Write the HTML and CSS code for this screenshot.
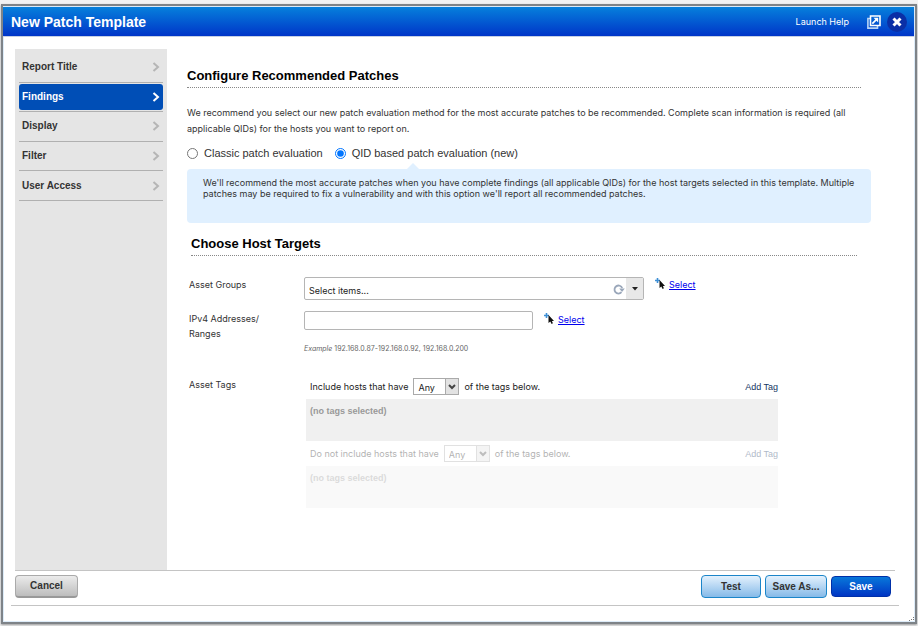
FILE: index.html
```html
<!DOCTYPE html>
<html lang="en">
<head>
<meta charset="utf-8">
<title>New Patch Template</title>
<link rel="stylesheet" href="styles.css">
</head>
<body>
<div class="window">
  <header class="titlebar">
    <h1>New Patch Template</h1>
    <a class="help" href="#">Launch Help</a>
    <button class="icon-btn" type="button" aria-label="Open in new window">
      <svg width="14" height="14" viewBox="0 0 14 14" fill="none" stroke="#fff"><path d="M3 3.5H.9v9.600h9.600V11" stroke="#b9d4f5" stroke-width="1.600"/><path d="M3.500 1h9.500v9.500H3.500z" stroke-width="1.600"/><path d="M5.300 8.700l4-4" stroke-width="1.800"/><path d="M6.500 2.800h4.700v4.700z" fill="#fff" stroke="none"/></svg>
    </button>
    <button class="icon-btn close" type="button" aria-label="Close">
      <svg width="20" height="20" viewBox="0 0 20 20"><circle cx="10" cy="10" r="10" fill="#0a2fa6"/><path d="M6.500 6.500l7 7M13.500 6.500l-7 7" stroke="#fff" stroke-width="3"/></svg>
    </button>
  </header>

  <div class="body">
    <nav class="sidebar">
      <ul>
        <li><a href="#">Report Title<svg class="chev" viewBox="0 0 8 10"><path d="M1.500 1l4.500 4-4.500 4"/></svg></a></li>
        <li><a class="active" href="#">Findings<svg class="chev" viewBox="0 0 8 10"><path d="M1.500 1l4.500 4-4.500 4"/></svg></a></li>
        <li><a href="#">Display<svg class="chev" viewBox="0 0 8 10"><path d="M1.500 1l4.500 4-4.500 4"/></svg></a></li>
        <li><a href="#">Filter<svg class="chev" viewBox="0 0 8 10"><path d="M1.500 1l4.500 4-4.500 4"/></svg></a></li>
        <li><a href="#">User Access<svg class="chev" viewBox="0 0 8 10"><path d="M1.500 1l4.500 4-4.500 4"/></svg></a></li>
      </ul>
    </nav>

    <main class="content">
      <section>
        <h2 class="wide">Configure Recommended Patches</h2>
        <p class="intro">We recommend you select our new patch evaluation method for the most accurate patches to be recommended. Complete scan information is required (all applicable QIDs) for the hosts you want to report on.</p>
        <div class="radios">
          <label><input type="radio" name="method">Classic patch evaluation</label>
          <label><input type="radio" name="method" checked>QID based patch evaluation (new)</label>
        </div>
        <p class="info">We'll recommend the most accurate patches when you have complete findings (all applicable QIDs) for the host targets selected in this template. Multiple patches may be required to fix a vulnerability and with this option we'll report all recommended patches.</p>
      </section>

      <section class="targets">
        <h2>Choose Host Targets</h2>
        <div class="field groups">
          <label for="groups">Asset Groups</label>
          <div class="control">
            <div class="combo">
              <input id="groups" type="text" value="Select items...">
              <svg class="refresh" width="12" height="12" viewBox="0 0 12 12"><path d="M8.500 9.200A4 4 0 1 1 9.200 5" fill="none" stroke="#9aa7ba" stroke-width="1.800"/><path d="M6.200 5.500h5.600L9 9z" fill="#9aa7ba"/></svg>
              <button type="button" aria-label="Show items"><svg width="6" height="4" viewBox="0 0 6 4"><path d="M0 0h6L3 3.500z" fill="#222"/></svg></button>
            </div>
            <a class="pick" href="#"><svg width="10" height="12" viewBox="0 0 10 12"><path d="M2.500 0v5M0 2.500h5" stroke="#3d8fd6" stroke-width="1.600"/><path d="M4.500 2v8l1.800-1.500L7.600 11l1.300-.700L7.900 8H10z" fill="#111"/></svg><span>Select</span></a>
          </div>
        </div>
        <div class="field ips">
          <label for="ips">IPv4 Addresses/<br>Ranges</label>
          <div class="control">
            <input id="ips" class="text" type="text">
            <a class="pick" href="#"><svg width="10" height="12" viewBox="0 0 10 12"><path d="M2.500 0v5M0 2.500h5" stroke="#3d8fd6" stroke-width="1.600"/><path d="M4.500 2v8l1.800-1.500L7.600 11l1.300-.700L7.900 8H10z" fill="#111"/></svg><span>Select</span></a>
            <p class="example"><em>Example</em> 192.168.0.87-192.168.0.92, 192.168.0.200</p>
          </div>
        </div>
        <div class="field tags">
          <span>Asset Tags</span>
          <div class="tag-sets">
            <div class="tag-set">
              <div class="rule">
                <label for="inc">Include hosts that have</label>
                <span class="select"><select id="inc"><option>Any</option><option>All</option></select><svg viewBox="0 0 8 6"><path d="M1 1l3 3 3-3"/></svg></span>
                <span>of the tags below.</span>
                <a href="#">Add Tag</a>
              </div>
              <div class="tag-box">(no tags selected)</div>
            </div>
            <div class="tag-set off">
              <div class="rule">
                <label for="exc">Do not include hosts that have</label>
                <span class="select"><select id="exc" disabled><option>Any</option><option>All</option></select><svg viewBox="0 0 8 6"><path d="M1 1l3 3 3-3"/></svg></span>
                <span>of the tags below.</span>
                <a href="#">Add Tag</a>
              </div>
              <div class="tag-box">(no tags selected)</div>
            </div>
          </div>
        </div>
      </section>
    </main>
  </div>

  <footer class="actions">
    <div class="bar">
      <button class="btn cancel" type="button">Cancel</button>
      <button class="btn light push" type="button">Test</button>
      <button class="btn light" type="button">Save As...</button>
      <button class="btn save" type="button">Save</button>
    </div>
  </footer>
  <svg class="grip" width="5" height="4" viewBox="0 0 5 4" fill="#777"><path d="M4 0h1v1H4zM2 2h1v1H2zM4 2h1v1H4zM0 3h1v1H0z"/></svg>
</div>
</body>
</html>
```
FILE: styles.css
```css
* { box-sizing: border-box; }

body {
  margin: 0;
  background: #f1f2f3;
  color: #333;
  font: 10px/16px "Liberation Sans", Arial, sans-serif;
}

h1, h2, p, ul { margin: 0; padding: 0; }
button, input, select { font: inherit; color: inherit; margin: 0; }
svg { display: block; }

.window {
  position: relative;
  display: flex;
  flex-direction: column;
  min-height: calc(100vh - 6px);
  margin: 4px 1px 2px;
  border: 2px solid #7e8388;
  background: #fff;
  box-shadow: 0 1px 2px #999, inset 0 0 0 1px #dcebf8;
}

.titlebar {
  display: flex;
  align-items: center;
  height: 30px;
  margin: 1px 1px 0 0;
  padding: 0 7px 0 8px;
  border-bottom: 1px solid #c5d0e4;
  background: linear-gradient(#0680dc, #0035c8);
  color: #fff;
}
.titlebar h1 { flex: 1; font-size: 14px; font-weight: bold; }
.help {
  margin-right: 18px;
  color: #fff;
  font: 9px/16px Inter, Arial, sans-serif;
  text-decoration: none;
}
.icon-btn { padding: 0; border: 0; background: none; }
.close { margin-left: 6px; }

.body { flex: 1; display: flex; padding: 12px 0 0 12px; }

.sidebar { width: 152px; padding: 4px; background: #e5e5e5; }
.sidebar ul { display: grid; grid-auto-rows: 1fr; height: 148px; list-style: none; }
.sidebar li { display: flex; padding: 1px 0; border-bottom: 1px solid #b0b0b0; }
.sidebar a {
  flex: 1;
  display: flex;
  align-items: center;
  justify-content: space-between;
  padding: 0 3px;
  border-radius: 3px;
  color: #333;
  font-weight: bold;
  text-decoration: none;
}
.chev { width: 8px; height: 10px; fill: none; stroke: #b5b5b5; stroke-width: 2; }
.sidebar .active { background: #004eb6; color: #fff; }
.active .chev { stroke: #fff; }

.content {
  flex: 1;
  padding: 19px 44px 0 20px;
  font: 9px/16px Inter, Arial, sans-serif;
}
h2 {
  padding-bottom: 3px;
  border-bottom: 1px dotted #888;
  color: #000;
  font: bold 13px/16px "Liberation Sans", Arial, sans-serif;
}
h2.wide { margin-right: 10px; }
.intro { margin: 17px 20px 0 0; }

.radios { display: flex; gap: 12px; margin-top: 8px; font: 11px/16px "Liberation Sans", Arial, sans-serif; }
.radios label { display: flex; align-items: center; gap: 6px; }
.radios input { width: 11px; height: 11px; }

.info {
  position: relative;
  min-height: 54px;
  margin-top: 8px;
  padding: 8px 16px;
  border-radius: 4px;
  background: #e0f0ff;
  line-height: 11px;
}
.info::before {
  content: "";
  position: absolute;
  top: -6px;
  left: 220px;
  border: 6px solid transparent;
  border-top: 0;
  border-bottom-color: #e0f0ff;
}

.targets { margin-top: 13px; }
.targets h2 { margin: 0 14px 0 4px; }
.field { display: flex; padding-left: 2px; }
.field > :first-child { width: 115px; line-height: 15px; }
.control { flex: 1; display: flex; flex-wrap: wrap; }
.groups { margin-top: 21px; }
.ips { margin-top: 11px; }
.tags { margin-top: 20px; }

.combo {
  display: flex;
  align-items: center;
  width: 340px;
  height: 23px;
  border: 1px solid #b5b5b5;
  border-radius: 2px;
}
.combo input { flex: 1; min-width: 0; height: 21px; padding: 4px 4px 0; border: 0; background: none; color: #222; }
.combo button {
  display: grid;
  place-items: center;
  width: 17px;
  height: 21px;
  margin-left: 1px;
  padding: 0;
  border: 0;
  background: #e8e8e8;
}
.text { width: 229px; height: 19px; border: 1px solid #b5b5b5; border-radius: 2px; }
.pick { display: flex; align-items: flex-start; gap: 4px; margin-left: 11px; color: #00e; text-decoration: none; }
.pick svg { margin-top: 1px; }
.pick span { text-decoration: underline; }
.ips .pick { padding-top: 1px; }
.example { width: 100%; margin-top: 11px; color: #666; font-size: 7px; line-height: 16px; }

.tag-sets { flex: 1; max-width: 474px; margin-top: -3px; padding-left: 2px; }
.rule { display: flex; align-items: center; gap: 5px; height: 25px; padding-left: 4px; color: #222; }
.rule a { margin-left: auto; color: #14365f; font-family: "Liberation Sans", Arial, sans-serif; text-decoration: none; }
.tag-box {
  height: 42px;
  padding: 4px;
  background: #f0f0f0;
  color: #999;
  font-family: "Liberation Sans", Arial, sans-serif;
  font-weight: bold;
}
.off { opacity: .35; }

.select { position: relative; display: flex; }
.select select {
  appearance: none;
  width: 46px;
  height: 17px;
  padding: 2px 4px 0;
  border: 1px solid #aaa;
  border-radius: 0;
  background: linear-gradient(90deg, #fff 31px, #aaa 31px, #aaa 32px, #e2e2e2 32px);
  color: #222;
  opacity: 1;
  line-height: 13px;
}
.select svg {
  position: absolute;
  top: 6px;
  right: 3px;
  width: 8px;
  height: 6px;
  fill: none;
  stroke: #444;
  stroke-width: 2;
  pointer-events: none;
}

.actions { margin: 0 16px 16px 8px; padding: 0 4px 7px; border-bottom: 1px solid #c4c4c4; }
.bar { display: flex; align-items: center; gap: 4px; padding: 4px 4px 0 0; border-top: 1px solid #c4c4c4; }
.btn {
  height: 23px;
  padding: 0;
  border-radius: 4px;
  color: #333;
  font-weight: bold;
}
.push { margin-left: auto; }
.cancel { width: 63px; border: 1px solid #aaa; border-bottom: 2px solid #999; background: linear-gradient(#ebebeb, #bdbdbd); }
.light { width: 60px; border: 1px solid #1b85c9; background: linear-gradient(#e3f1fd, #86bae8); }
.light + .light { width: 62px; }
.save { width: 60px; height: 21px; border: 1px solid #0030a8; background: linear-gradient(#0878da, #0035c4); color: #fff; }
.grip { position: absolute; right: 1px; bottom: 1px; }
```
